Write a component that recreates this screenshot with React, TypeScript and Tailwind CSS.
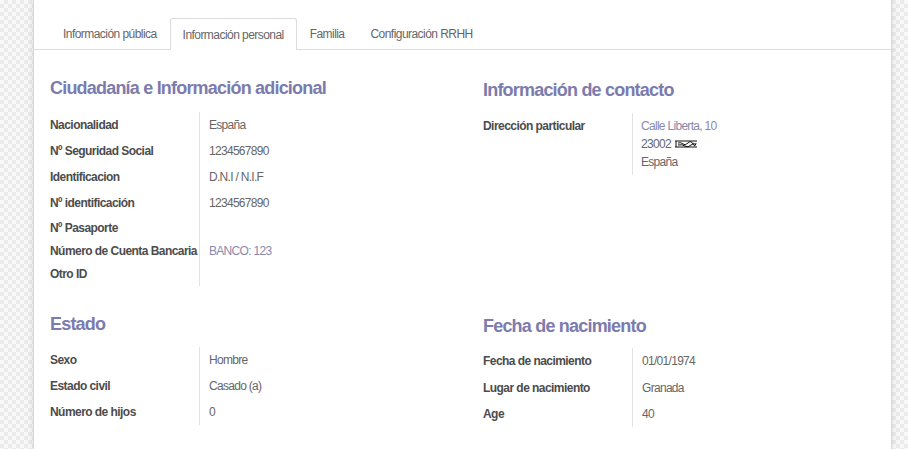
import React from "react";

type Row = { label: string; value?: React.ReactNode; h: number };

const ciudadania: Row[] = [
  { label: "Nacionalidad", value: "España", h: 26 },
  { label: "Nº Seguridad Social", value: "1234567890", h: 26 },
  { label: "Identificacion", value: "D.N.I / N.I.F", h: 26 },
  { label: "Nº identificación", value: "1234567890", h: 26 },
  { label: "Nº Pasaporte", h: 24 },
  { label: "Número de Cuenta Bancaria", value: <span className="text-[#8a89ad]">BANCO: 123</span>, h: 22 },
  { label: "Otro ID", h: 24 },
];

const estado: Row[] = [
  { label: "Sexo", value: "Hombre", h: 26 },
  { label: "Estado civil", value: "Casado (a)", h: 26 },
  { label: "Número de hijos", value: "0", h: 26 },
];

const nacimiento: Row[] = [
  { label: "Fecha de nacimiento", value: "01/01/1974", h: 26 },
  { label: "Lugar de nacimiento", value: "Granada", h: 27 },
  { label: "Age", value: "40", h: 26 },
];

const tabs = ["Información pública", "Información personal", "Familia", "Configuración RRHH"];

const Scribble = () => (
  <svg width="24" height="10" viewBox="0 0 24 10" className="inline-block ml-[3px] align-[-1px]">
    <path d="M1 2 L23 2 M2 2 L2 8 M1 8 L23 8" stroke="#111" strokeWidth="1" fill="none" />
    <path d="M4 4 Q7 3 9 5 T14 4 T19 5 T22 4 M4 6 Q8 5 11 7 T17 6 T22 6" stroke="#111" strokeWidth="1" fill="none" />
  </svg>
);

const FieldTable = ({ rows }: { rows: Row[] }) => (
  <div className="flex">
    <div className="w-[150px] shrink-0 border-r border-[#e2e2e2]">
      {rows.map((r) => (
        <div key={r.label} style={{ height: r.h }} className="flex items-center whitespace-nowrap text-[12px] tracking-[-0.55px] font-bold text-[#4c4c4c]">
          {r.label}
        </div>
      ))}
    </div>
    <div className="pl-[9px]">
      {rows.map((r) => (
        <div key={r.label} style={{ height: r.h }} className="flex items-center whitespace-nowrap text-[12px] tracking-[-0.7px] text-[#666]">
          {r.value}
        </div>
      ))}
    </div>
  </div>
);

const Heading = ({ children, className }: { children: React.ReactNode; className: string }) => (
  <h2 className={`h-[24px] leading-[24px] whitespace-nowrap text-[18px] tracking-[-0.8px] font-bold text-[#7c7bad] ${className}`}>{children}</h2>
);

export default function App() {
  return (
    <div className="flex w-[908px] h-[449px] overflow-hidden font-['Liberation_Sans',Arial,sans-serif] bg-[repeating-conic-gradient(#ebebeb_0%_25%,#f8f8f8_0%_50%)] bg-[length:8px_8px]">
      <div className="w-[33px] shrink-0" />
      <div className="w-[859px] shrink-0 bg-white border-x border-[#d6d6d6] shadow-[0_0_6px_rgba(0,0,0,0.12)]">
        {/* tabs */}
        <ul className="flex pt-[18px] pl-[16px] border-b border-[#dcdcdc]">
          {tabs.map((t, i) => (
            <li
              key={t}
              className={`h-[31px] px-[12px] flex items-center whitespace-nowrap text-[12px] tracking-[-0.55px] text-[#666] rounded-t-[3px] ${
                i === 1 ? "border border-b-0 border-[#dcdcdc] bg-white h-[32px] -mb-px" : "border border-transparent"
              }`}
            >
              {t}
            </li>
          ))}
        </ul>

        <div className="flex pl-[16px]">
          <div className="w-[433px] shrink-0">
            <Heading className="mt-[26px] mb-[12px]">Ciudadanía e Información adicional</Heading>
            <FieldTable rows={ciudadania} />
          </div>
          <div className="flex-1">
            <Heading className="mt-[28px] mb-[11px]">Información de contacto</Heading>
            <div className="flex">
              <div className="w-[150px] shrink-0 border-r border-[#e2e2e2] h-[62px]">
                <div className="h-[26px] flex items-center text-[12px] tracking-[-0.55px] font-bold text-[#4c4c4c]">Dirección particular</div>
              </div>
              <div className="pl-[8px] pt-[4px] text-[12px] tracking-[-0.7px] leading-[18px] text-[#666]">
                <div className="text-[#8a89ad]">Calle Liberta, 10</div>
                <div>
                  23002
                  <Scribble />
                </div>
                <div>España</div>
              </div>
            </div>
          </div>
        </div>

        <div className="flex pl-[16px]">
          <div className="w-[433px] shrink-0">
            <Heading className="mt-[26px] mb-[11px]">Estado</Heading>
            <FieldTable rows={estado} />
          </div>
          <div className="flex-1">
            <Heading className="mt-[28px] mb-[10px]">Fecha de nacimiento</Heading>
            <FieldTable rows={nacimiento} />
          </div>
        </div>
      </div>
      <div className="flex-1" />
    </div>
  );
}
